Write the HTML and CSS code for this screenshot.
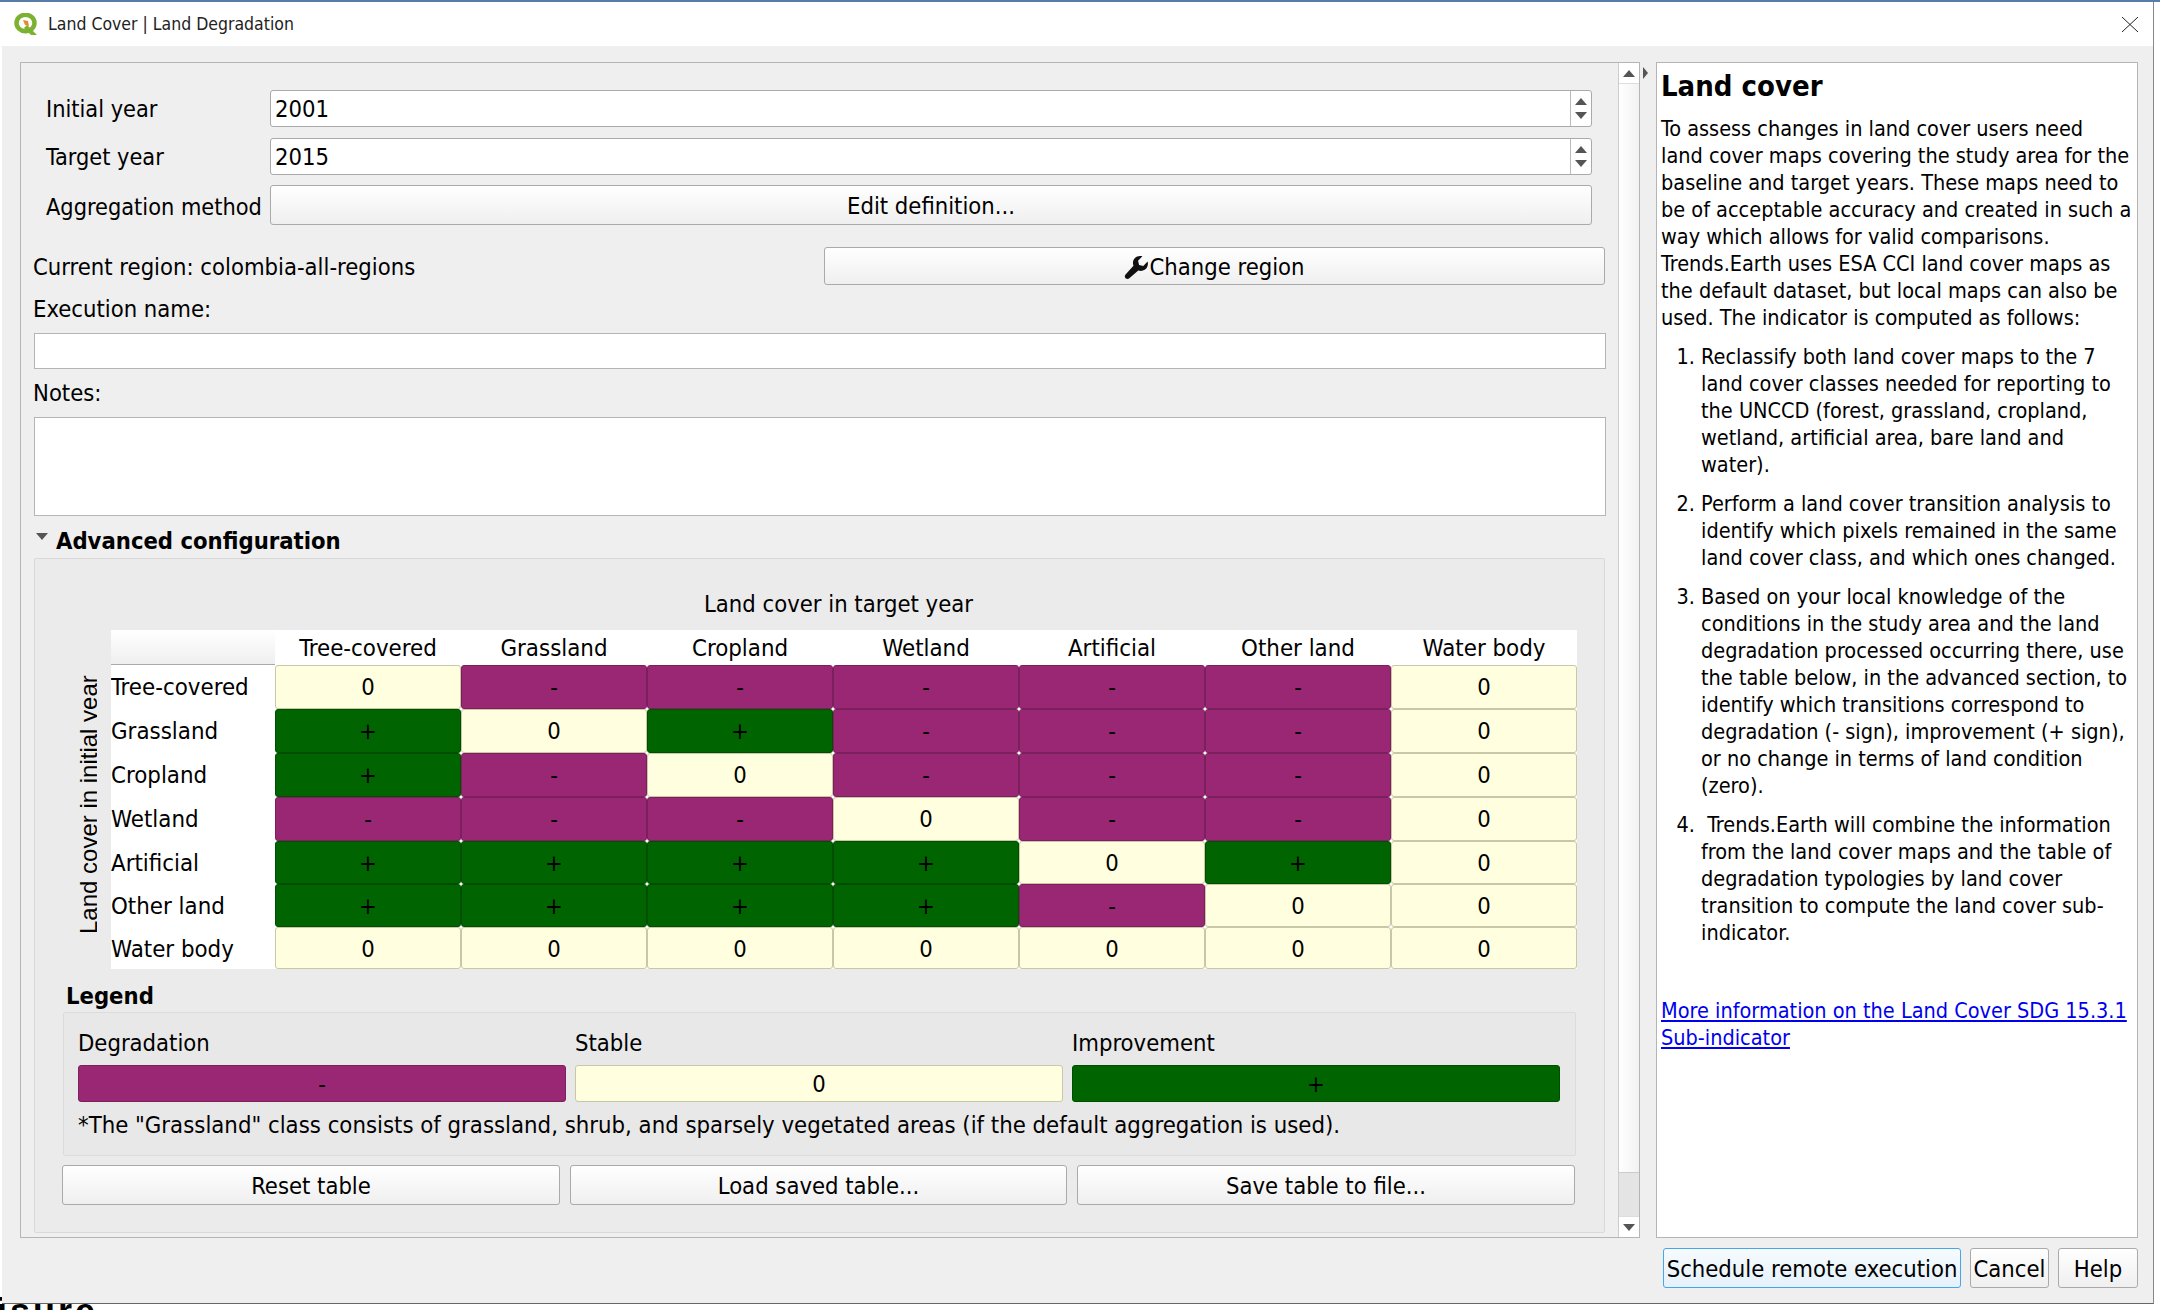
FILE: index.html
```html
<!DOCTYPE html>
<html lang="en">
<head>
<meta charset="utf-8">
<title>Land Cover | Land Degradation</title>
<link rel="stylesheet" href="styles.css">
</head>
<body>
<div class="behind">isure</div>
<div class="window">
  <header class="titlebar">
    <svg class="qgis" viewBox="0 0 24 22" width="24" height="22"><ellipse cx="11.500" cy="10" rx="9" ry="8.200" fill="none" stroke="#7cb131" stroke-width="4.500"/><path d="M9 7l5 1 1 5-4-1z" fill="#e8892b"/><path d="M13 12l10 10h-6l-7-7z" fill="#7cb131"/></svg>
    <span class="title">Land Cover | Land Degradation</span>
    <svg class="close" viewBox="0 0 16 15" width="16" height="15"><path d="M0 0L16 15M16 0L0 15" stroke="#222" stroke-width="1" fill="none"/></svg>
  </header>
  <div class="content">
    <div class="panes">
      <section class="main-pane">
        <div class="scroll-content">
          <div class="form-grid">
            <label>Initial year</label>
            <div class="spin"><span class="spin-val">2001</span><span class="spin-btns"><i class="up"></i><i class="down"></i></span></div>
            <label>Target year</label>
            <div class="spin"><span class="spin-val">2015</span><span class="spin-btns"><i class="up"></i><i class="down"></i></span></div>
            <label>Aggregation method</label>
            <button class="btn agg">Edit definition...</button>
          </div>
          <div class="region-row">
            <span class="region-label">Current region: colombia-all-regions</span>
            <button class="btn change"><svg viewBox="0 0 24 24" width="25" height="25"><path d="M22.700 6.300l-4.200 4.200-4-1-1-4 4.200-4.200c-3-.9-6.400 0-8 2.600-1.300 2-1.400 4.300-.6 6.300L1.500 18.800c-1 1-1 2.600 0 3.600s2.600 1 3.600 0l8.600-7.600c2 .8 4.300.6 6.200-.6 2.700-1.700 3.700-4.900 2.800-7.900z" fill="#111"/></svg>Change region</button>
          </div>
          <div class="field-label exec">Execution name:</div>
          <div class="line-edit"></div>
          <div class="field-label notes">Notes:</div>
          <div class="text-edit"></div>
          <div class="adv-head"><i class="tri-down"></i><span>Advanced configuration</span></div>
          <div class="adv-box">
            <div class="target-caption">Land cover in target year</div>
            <div class="matrix-wrap">
              <div class="axis"><span>Land cover in initial year</span></div>
              <div class="matrix">
                <div class="corner"></div>
                <div class="ch">Tree-covered</div><div class="ch">Grassland</div><div class="ch">Cropland</div><div class="ch">Wetland</div><div class="ch">Artificial</div><div class="ch">Other land</div><div class="ch">Water body</div>

                <div class="rh">Tree-covered</div>
                <div class="c z">0</div><div class="c m">-</div><div class="c m">-</div><div class="c m">-</div><div class="c m">-</div><div class="c m">-</div><div class="c z">0</div>
                <div class="rh">Grassland</div>
                <div class="c p">+</div><div class="c z">0</div><div class="c p">+</div><div class="c m">-</div><div class="c m">-</div><div class="c m">-</div><div class="c z">0</div>
                <div class="rh">Cropland</div>
                <div class="c p">+</div><div class="c m">-</div><div class="c z">0</div><div class="c m">-</div><div class="c m">-</div><div class="c m">-</div><div class="c z">0</div>
                <div class="rh">Wetland</div>
                <div class="c m">-</div><div class="c m">-</div><div class="c m">-</div><div class="c z">0</div><div class="c m">-</div><div class="c m">-</div><div class="c z">0</div>
                <div class="rh">Artificial</div>
                <div class="c p">+</div><div class="c p">+</div><div class="c p">+</div><div class="c p">+</div><div class="c z">0</div><div class="c p">+</div><div class="c z">0</div>
                <div class="rh">Other land</div>
                <div class="c p">+</div><div class="c p">+</div><div class="c p">+</div><div class="c p">+</div><div class="c m">-</div><div class="c z">0</div><div class="c z">0</div>
                <div class="rh">Water body</div>
                <div class="c z">0</div><div class="c z">0</div><div class="c z">0</div><div class="c z">0</div><div class="c z">0</div><div class="c z">0</div><div class="c z">0</div>
              </div>
            </div>
            <div class="legend-title">Legend</div>
            <div class="legend-box">
              <div class="legend-grid">
                <div class="lg-label">Degradation</div><div class="lg-label">Stable</div><div class="lg-label">Improvement</div>
                <div class="c m lg">-</div><div class="c z lg">0</div><div class="c p lg">+</div>
              </div>
              <div class="legend-note">*The "Grassland" class consists of grassland, shrub, and sparsely vegetated areas (if the default aggregation is used).</div>
            </div>
            <div class="table-btns">
              <button class="btn">Reset table</button><button class="btn">Load saved table...</button><button class="btn">Save table to file...</button>
            </div>
          </div>
        </div>
        <div class="scrollbar">
          <div class="sb-btn"><i class="up"></i></div>
          <div class="sb-thumb"></div>
          <div class="sb-track"></div>
          <div class="sb-btn bottom"><i class="down"></i></div>
        </div>
      </section>
      <div class="splitter"><i class="tri-right"></i></div>
      <aside class="help">
        <h1>Land cover</h1>
        <p>To assess changes in land cover users need<br>land cover maps covering the study area for the baseline and target years. These maps need to be of acceptable accuracy and created in such a way which allows for valid comparisons. Trends.Earth uses ESA CCI land cover maps as the default dataset, but local maps can also be used. The indicator is computed as follows:</p>
        <ol>
          <li>Reclassify both land cover maps to the 7 land cover classes needed for reporting to the UNCCD (forest, grassland, cropland, wetland, artificial area, bare land and water).</li>
          <li>Perform a land cover transition analysis to identify which pixels remained in the same land cover class, and which ones changed.</li>
          <li>Based on your local knowledge of the conditions in the study area and the land degradation processed occurring there, use the table below, in the advanced section, to identify which transitions correspond to degradation (- sign), improvement (+ sign), or no change in terms of land condition (zero).</li>
          <li>&nbsp;Trends.Earth will combine the information from the land cover maps and the table of degradation typologies by land cover transition to compute the land cover sub-indicator.</li>
        </ol>
        <a class="more" href="#">More information on the Land Cover SDG 15.3.1 Sub-indicator</a>
      </aside>
    </div>
    <footer class="dialog-btns">
      <button class="btn primary">Schedule remote execution</button><button class="btn">Cancel</button><button class="btn">Help</button>
    </footer>
  </div>
</div>
</body>
</html>
```
FILE: styles.css
```css
* { box-sizing: border-box; }
html, body { margin: 0; padding: 0; width: 2160px; height: 1310px; overflow: hidden; }
html { background: #fff; }
body { position: relative; background: linear-gradient(#5a7aa8 2px, transparent 2px); font-family: "DejaVu Sans Condensed", "DejaVu Sans", sans-serif; font-stretch: condensed; font-size: 23.600px; color: #000; padding: 2px 0 0 2px; }
.behind { position: absolute; left: -3px; top: 1292px; font-family: "Liberation Sans", sans-serif; font-weight: bold; font-size: 36px; line-height: 40px; letter-spacing: 3px; }
.window { position: relative; width: 2152px; height: 1302px; background: #efefef; border-right: 1px solid #888; border-bottom: 1px solid #666; display: flex; flex-direction: column; }
.titlebar { height: 44px; background: #fff; display: flex; align-items: center; padding: 0 15px 0 12px; flex: none; }
.qgis { margin-right: 10px; }
.title { font-size: 17.500px; color: #222; flex: 1; }
.content { flex: 1; padding: 16px 0 0 18px; display: flex; flex-direction: column; min-height: 0; }
.panes { display: flex; height: 1176px; flex: none; }
.main-pane { width: 1620px; flex: none; border: 1px solid #b5b5b5; display: flex; }
.scroll-content { flex: 1; padding: 27px 0 0 0; min-width: 0; }
.form-grid { display: grid; grid-template-columns: 224px 1322px; padding-left: 25px; grid-template-rows: 37px 37px 40px; row-gap: 11px; align-items: center; white-space: nowrap; }
.form-grid label { font-size: 23.300px; }
.spin { height: 37px; background: #fff; border: 1px solid #aaa; border-radius: 3px; display: flex; }
.spin-val { flex: 1; padding-left: 4px; line-height: 36px; }
.spin-btns { width: 21px; border-left: 1px solid #bbb; display: flex; flex-direction: column; justify-content: center; align-items: center; gap: 7px; flex: none; }
.up { display: block; width: 0; height: 0; border-left: 6px solid transparent; border-right: 6px solid transparent; border-bottom: 7px solid #555; }
.down { display: block; width: 0; height: 0; border-left: 6px solid transparent; border-right: 6px solid transparent; border-top: 7px solid #555; }
.btn { font: inherit; color: #000; background: linear-gradient(#fff, #efefef); border: 1px solid #aaa; border-radius: 3px; padding: 2px 0 0; display: flex; align-items: center; justify-content: center; }
.agg { height: 40px; align-self: start; margin-top: -1px; }
.region-row { display: flex; justify-content: space-between; padding: 0 13px 0 12px; margin-top: 21px; height: 38px; align-items: center; }
.region-label { padding-top: 2px; }
.change { width: 781px; height: 38px; }
.field-label { padding-left: 12px; line-height: 30px; }
.exec { margin-top: 9px; }
.line-edit { margin: 9px 0 0 13px; width: 1572px; height: 36px; background: #fff; border: 1px solid #b5b5b5; }
.notes { margin-top: 9px; }
.text-edit { margin: 9px 0 0 13px; width: 1572px; height: 99px; background: #fff; border: 1px solid #b5b5b5; }
.adv-head { display: flex; align-items: center; padding: 2px 0 0 15px; margin-top: 6px; height: 36px; font-weight: bold; }
.tri-down { width: 0; height: 0; border-left: 6px solid transparent; border-right: 6px solid transparent; border-top: 7px solid #555; margin: -9px 8px 0 0; }
.adv-box { margin: 0 0 0 13px; width: 1571px; height: 675px; background: #ebebeb; border: 1px solid #d9d9d9; border-radius: 2px; padding: 30px 0 0 0; }
.target-caption { text-align: center; padding-left: 38px; line-height: 30px; }
.matrix-wrap { display: flex; margin-top: 11px; padding-left: 35px; }
.axis { width: 27px; margin-right: 14px; height: 339px; flex: none; overflow: hidden; display: flex; align-items: flex-start; justify-content: flex-start; writing-mode: vertical-rl; transform: rotate(180deg); line-height: 28px; padding: 35px 5px 0 0; font-family: "Liberation Sans", sans-serif; font-size: 24px; font-stretch: normal; white-space: nowrap; }
.matrix { display: grid; grid-template-columns: 164px repeat(7, 186px); grid-template-rows: 35px 44px 44px 44px 44px 43px 43px 42px; background: #fff; width: 1466px; height: 339px; }
.corner { background: linear-gradient(#fff, #efefef); border-bottom: 1px solid #aaa; }
.ch { text-align: center; line-height: 37px; background: #fff; white-space: nowrap; font-size: 23.800px; }
.rh { line-height: 45px; background: #fff; white-space: nowrap; overflow: hidden; font-size: 23.800px; }
.c { text-align: center; line-height: 42px; border-radius: 3px; border: 1px solid; }
.z { background: #ffffdf; border-color: #c8c8a8; }
.m { background: #9a2773; border-color: #7c1f5d; }
.p { background: #006400; border-color: #004f00; }
.legend-title { font-weight: bold; padding: 2px 0 0 31px; line-height: 30px; margin-top: 10px; }
.legend-box { margin: 1px 0 0 28px; width: 1513px; height: 144px; background: #e8e8e8; border: 1px solid #dcdcdc; border-radius: 2px; padding: 14px 14px 0 14px; }
.legend-grid { display: grid; grid-template-columns: 488px 488px 488px; column-gap: 9px; grid-template-rows: 38px 37px; }
.lg-label { line-height: 32px; }
.lg { line-height: 37px; height: 37px; }
.legend-note { line-height: 30px; padding-top: 2px; margin-top: 6px; white-space: nowrap; font-size: 23.700px; }
.table-btns { display: grid; grid-template-columns: 498px 497px 498px; column-gap: 10px; margin: 9px 0 0 27px; width: 1513px; }
.table-btns .btn { height: 40px; }
.scrollbar { width: 21px; flex: none; border-left: 1px solid #ccc; display: flex; flex-direction: column; background: #fafafa; }
.sb-btn { height: 21px; display: flex; align-items: center; justify-content: center; flex: none; background: #fff; border-bottom: 1px solid #ddd; }
.sb-btn.bottom { border-bottom: 0; border-top: 1px solid #ddd; }
.sb-thumb { height: 1089px; flex: none; background: linear-gradient(90deg, #fff, #f2f2f2); border-bottom: 1px solid #ccc; }
.sb-track { flex: 1; background: #e4e4e4; }
.splitter { width: 16px; flex: none; padding: 5px 0 0 3px; }
.tri-right { display: block; width: 0; height: 0; border-top: 6px solid transparent; border-bottom: 6px solid transparent; border-left: 5px solid #555; }
.help { width: 482px; flex: none; background: #fff; border: 1px solid #b5b5b5; padding: 0 4px; font-size: 21.500px; line-height: 27px; overflow: hidden; }
.help h1 { font-size: 29px; line-height: 36px; margin: 5px 0 11px; font-weight: bold; }
.help p { margin: 0 0 12px; }
.help ol { margin: 0; padding: 0 0 0 40px; }
.help li { margin-bottom: 12px; }
.more { display: block; color: #0000ee; text-decoration: underline; margin-top: 51px; }
.dialog-btns { display: flex; justify-content: flex-end; gap: 9px; margin-top: 10px; padding-right: 15px; }
.dialog-btns .btn { height: 40px; }
.dialog-btns .btn:nth-child(1) { width: 298px; }
.dialog-btns .btn:nth-child(2) { width: 79px; }
.dialog-btns .btn:nth-child(3) { width: 80px; }
.primary { border-color: #46a7e8; background: linear-gradient(#f6fbff, #e5f1fb); }
```
